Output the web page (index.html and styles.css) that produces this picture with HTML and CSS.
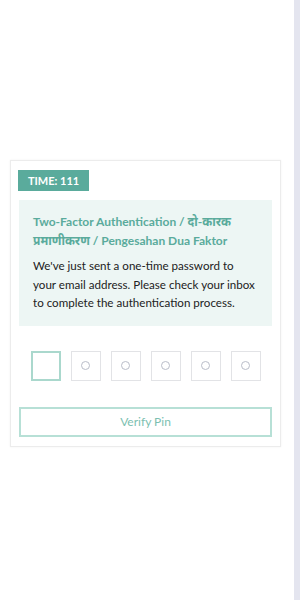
FILE: index.html
```html
<!DOCTYPE html>
<html lang="en">
<head>
  <meta charset="UTF-8">
  <meta name="viewport" content="width=device-width, initial-scale=1.0">
  <title>Two-Factor Authentication</title>
  <link rel="stylesheet" href="styles.css">
</head>
<body>
  <div class="page">
    <main class="main">
      <div class="card">
        <div class="timer">TIME: 111</div>

        <div class="notice">
          <h2 class="notice-title">Two-Factor Authentication / दो-कारक प्रमाणीकरण / Pengesahan Dua Faktor</h2>
          <p class="notice-text">We've just sent a one-time password to<br>your email address. Please check your inbox to complete the authentication process.</p>
        </div>

        <div class="pins">
          <div class="pin active"></div>
          <div class="pin"><span class="dot"></span></div>
          <div class="pin"><span class="dot"></span></div>
          <div class="pin"><span class="dot"></span></div>
          <div class="pin"><span class="dot"></span></div>
          <div class="pin"><span class="dot"></span></div>
        </div>

        <button class="verify">Verify Pin</button>
      </div>
    </main>
    <div class="rail"></div>
  </div>
</body>
</html>
```

FILE: styles.css
```css
html, body {
  margin: 0;
  padding: 0;
  height: 100%;
}
body {
  font-family: Lato, "Noto Sans", sans-serif;
  background: #fff;
  color: #222;
}
.page {
  display: flex;
  height: 100vh;
}
.main {
  flex: 1;
  display: flex;
  align-items: center;
  padding-top: 7px;
}
.rail {
  width: 6px;
  background: #e4e5ef;
}
.card {
  width: 271px;
  margin-left: 10px;
  box-sizing: border-box;
  border: 1px solid #ececec;
  box-shadow: 0 0 2px rgba(0, 0, 0, 0.06);
  padding: 8px 8px 9px;
}
.timer {
  display: inline-block;
  background: #5aab9c;
  color: #fff;
  font-weight: bold;
  font-size: 11px;
  line-height: 21px;
  padding: 0 10px;
  margin-left: -1px;
}
.notice {
  margin-top: 9px;
  background: #edf6f4;
  padding: 12px 8px 13px 14px;
}
.notice-title {
  margin: 0;
  font-size: 12px;
  font-weight: bold;
  line-height: 19px;
  color: #5aab9c;
}
.notice-text {
  margin: 7px 0 0;
  font-size: 11.6px;
  line-height: 18.5px;
  color: #222;
}
.pins {
  display: flex;
  justify-content: center;
  gap: 10px;
  margin-top: 25px;
}
.pin {
  width: 30px;
  height: 30px;
  box-sizing: border-box;
  border: 1px solid #e2e3e6;
  display: flex;
  align-items: center;
  justify-content: center;
}
.pin.active {
  border: 2px solid #aad8cd;
}
.dot {
  width: 9px;
  height: 9px;
  box-sizing: border-box;
  border: 1.5px solid #b9bdc9;
  border-radius: 50%;
}
.verify {
  display: block;
  width: 100%;
  height: 30px;
  margin-top: 26px;
  background: #fff;
  border: 2px solid #b7e0d6;
  color: #7cbfb1;
  font-family: inherit;
  font-size: 12px;
}
```
